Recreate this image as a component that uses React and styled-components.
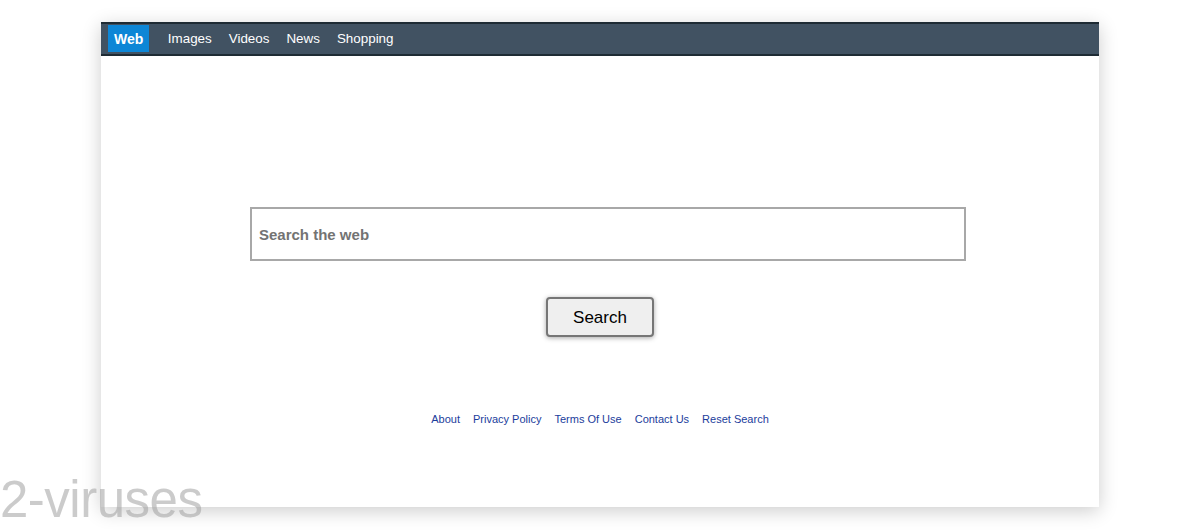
import React from "react";
import styled, { createGlobalStyle } from "styled-components";

const Global = createGlobalStyle`
  html, body { margin: 0; padding: 0; background: #fff; }
  body { font-family: "Liberation Sans", Arial, sans-serif; }
`;

const Page = styled.div`
  position: relative;
  width: 1200px;
  height: 530px;
  padding-top: 22px;
  box-sizing: border-box;
  overflow: hidden;
`;

const Window = styled.div`
  margin-left: 101px;
  width: 998px;
  height: 485px;
  background: #fff;
  box-shadow: 0 4px 18px rgba(0, 0, 0, 0.2);
  display: flex;
  flex-direction: column;
`;

const NavBar = styled.nav`
  height: 30px;
  background: #415262;
  border-top: 2px solid #1e2b34;
  border-bottom: 2px solid #1e2b34;
  display: flex;
  align-items: stretch;
  padding-left: 7px;
`;

const Tab = styled.a`
  display: flex;
  align-items: center;
  padding: 0 ${(p) => (p.$active ? "6px" : "8.5px")};
  margin-top: 1px;
  margin-right: ${(p) => (p.$active ? "10px" : "0")};
  height: 27px;
  background: ${(p) => (p.$active ? "#0d86d6" : "transparent")};
  color: #fff;
  font-size: ${(p) => (p.$active ? "14px" : "13.4px")};
  font-weight: ${(p) => (p.$active ? "700" : "400")};
  text-decoration: none;
  cursor: pointer;
`;

const Main = styled.main`
  flex: 1;
  display: flex;
  flex-direction: column;
  align-items: center;
  padding-top: 151px;
`;

const SearchInput = styled.input`
  width: 716px;
  height: 54px;
  margin-left: 16px;
  box-sizing: border-box;
  border: 2px solid #a8a8a8;
  padding: 0 7px;
  font-family: "Liberation Sans", Arial, sans-serif;
  font-size: 15px;
  font-weight: 700;
  color: #333;
  outline: none;
  &::placeholder { color: #737373; opacity: 1; }
`;

const SearchButton = styled.button`
  margin-top: 36px;
  width: 108px;
  height: 40px;
  padding-top: 2px;
  border: 2px solid #767676;
  border-radius: 4px;
  background: #efefef;
  box-shadow: 0 1px 5px rgba(0, 0, 0, 0.35);
  font-family: "Liberation Sans", Arial, sans-serif;
  font-size: 17px;
  color: #000;
  cursor: pointer;
`;

const Footer = styled.div`
  margin-top: 76px;
  display: flex;
  gap: 13px;
`;

const FootLink = styled.a`
  font-size: 11px;
  color: #1b3d9c;
  text-decoration: none;
  cursor: pointer;
`;

const Watermark = styled.div`
  position: absolute;
  left: 0;
  top: 470px;
  font-family: "Liberation Sans", Arial, sans-serif;
  font-size: 51px;
  letter-spacing: -0.5px;
  color: rgba(160, 160, 160, 0.55);
  pointer-events: none;
`;

export default function App() {
  const tabs = ["Images", "Videos", "News", "Shopping"];
  const links = ["About", "Privacy Policy", "Terms Of Use", "Contact Us", "Reset Search"];
  return (
    <>
      <Global />
      <Page>
        <Window>
          <NavBar>
            <Tab $active>Web</Tab>
            {tabs.map((t) => (
              <Tab key={t}>{t}</Tab>
            ))}
          </NavBar>
          <Main>
            <SearchInput placeholder="Search the web" />
            <SearchButton>Search</SearchButton>
            <Footer>
              {links.map((l) => (
                <FootLink key={l}>{l}</FootLink>
              ))}
            </Footer>
          </Main>
        </Window>
        <Watermark>2-viruses</Watermark>
      </Page>
    </>
  );
}
